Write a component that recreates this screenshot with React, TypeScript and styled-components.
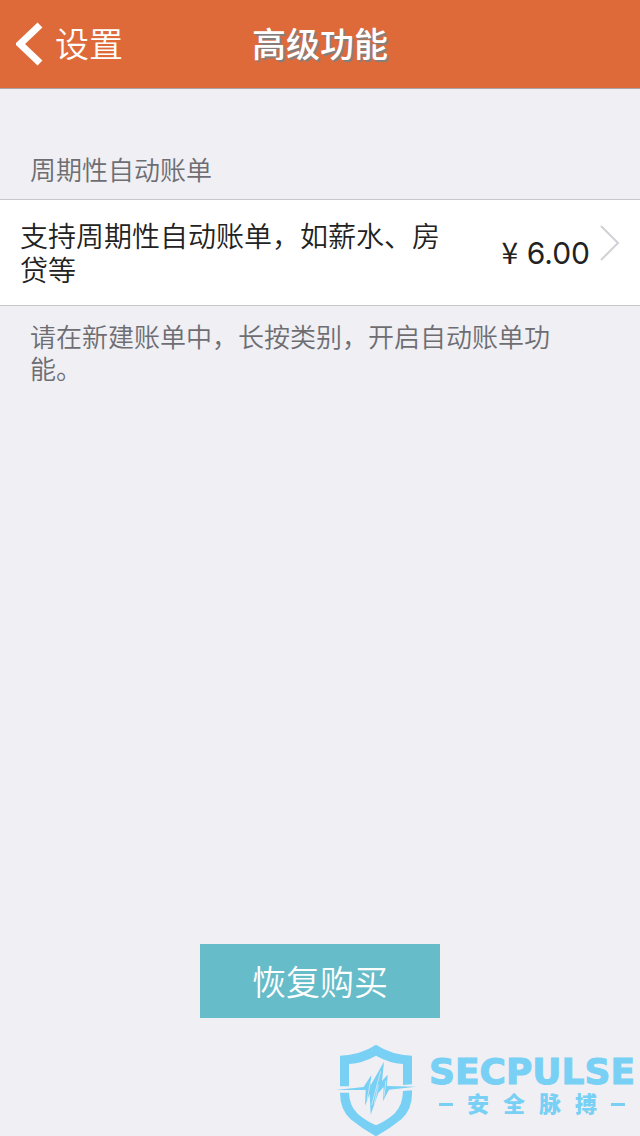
import React from "react";
import styled, { createGlobalStyle } from "styled-components";

const GlobalStyle = createGlobalStyle`
  * { box-sizing: border-box; }
  body {
    margin: 0;
    background: #efeff4;
    font-family: Inter, "Noto Sans CJK SC", sans-serif;
  }
`;

const Page = styled.div`
  display: flex;
  flex-direction: column;
  min-height: 100vh;
`;

const NavBar = styled.header`
  display: grid;
  grid-template-columns: 1fr auto 1fr;
  align-items: center;
  height: 89px;
  padding: 0 16px;
  background: #de6a3a;
  border-bottom: 1px solid #a9a3a6;
  color: #fff;
`;

const BackLink = styled.a`
  display: flex;
  align-items: center;
  gap: 12px;
  color: inherit;
  text-decoration: none;
  font-size: 34px;
  font-weight: 350;
  line-height: 48px;
`;

const BackLabel = styled.span`
  padding-top: 2px;
`;

const NavTitle = styled.h1`
  margin: 0;
  padding-top: 2px;
  font-size: 34px;
  font-weight: 500;
  line-height: 48px;
  text-shadow: 2px 2px 1px #808080;
`;

const SectionTitle = styled.h2`
  margin: 0;
  padding: 64px 30px 10px;
  color: #6d6d72;
  font-size: 26px;
  font-weight: 350;
  line-height: 36px;
`;

const ProductRow = styled.button`
  display: flex;
  align-items: center;
  width: 100%;
  padding: 20px 20px 17px;
  border: solid #c8c7cc;
  border-width: 1px 0;
  background: #fff;
  color: #222;
  font-family: inherit;
  text-align: left;
`;

const ProductName = styled.span`
  flex: 1;
  padding-right: 48px;
  font-size: 28px;
  font-weight: 350;
  line-height: 34px;
`;

const Price = styled.span`
  margin-right: 10px;
  padding-bottom: 4px;
  font-size: 30px;
  line-height: 30px;
`;

const Currency = styled.span`
  font-family: "Noto Sans CJK SC", sans-serif;
`;

const Chevron = styled.svg`
  align-self: flex-start;
  margin-top: 5px;
`;

const SectionNote = styled.p`
  margin: 0;
  padding: 16px 60px 0 30px;
  color: #6d6d72;
  font-size: 26px;
  font-weight: 350;
  line-height: 32px;
`;

const RestoreButton = styled.button`
  align-self: center;
  width: 240px;
  height: 74px;
  margin-top: auto;
  padding: 0 0 2px;
  border: 0;
  background: #66bcc9;
  color: #fff;
  font-family: inherit;
  font-size: 34px;
  font-weight: 350;
`;

const Brand = styled.footer`
  display: flex;
  justify-content: flex-end;
  gap: 13px;
  margin-top: 26px;
  padding-right: 5px;
  color: #78d0f4;
`;

const BrandText = styled.div`
  display: flex;
  flex-direction: column;
  align-items: center;
  padding-top: 10px;
`;

const BrandName = styled.span`
  font-family: "DejaVu Sans", sans-serif;
  font-size: 36px;
  font-weight: 700;
  line-height: 36px;
  -webkit-text-stroke: 1px currentColor;
`;

const BrandSub = styled.span`
  display: flex;
  align-items: center;
  gap: 14px;
  font-size: 22px;
  font-weight: 900;
  line-height: 28px;
`;

const Dash = styled.i`
  width: 14px;
  height: 3px;
  background: currentColor;
`;

export default function App() {
  return (
    <Page>
      <GlobalStyle />
      <NavBar>
        <BackLink href="#settings">
          <svg width="27" height="44" viewBox="0 0 27 44" fill="none" aria-hidden="true">
            <path d="M24 3 4 22 24 41" stroke="#fff" strokeWidth="7" />
          </svg>
          <BackLabel>设置</BackLabel>
        </BackLink>
        <NavTitle>高级功能</NavTitle>
      </NavBar>
      <main>
        <SectionTitle>周期性自动账单</SectionTitle>
        <ProductRow type="button">
          <ProductName>支持周期性自动账单，如薪水、房贷等</ProductName>
          <Price>
            <Currency>¥</Currency> 6.00
          </Price>
          <Chevron width="20" height="36" viewBox="0 0 20 36" fill="none" aria-hidden="true">
            <path d="M1 1 18 18 1 35" stroke="#d1d1d6" strokeWidth="2" />
          </Chevron>
        </ProductRow>
        <SectionNote>请在新建账单中，长按类别，开启自动账单功能。</SectionNote>
      </main>
      <RestoreButton type="button">恢复购买</RestoreButton>
      <Brand>
        <svg width="80" height="92" viewBox="30 22 240 276" fill="currentColor" aria-hidden="true">
          <path d="M42 149V57Q105 54 150 24Q195 54 258 57V143L231 145V82Q189 79 150 57Q111 79 69 82V149Z" />
          <path d="M42 168H69Q70 207 95 231Q116 250 150 266Q184 250 205 231Q230 207 231 163L258 161V172Q258 219 226 248Q192 276 150 299Q108 276 74 248Q42 218 42 168Z" />
          <path d="M30 160 113 151 136 115 134 146 174 75 168 133 185 114 183 148 270 150 189 159 171 193 173 151 157 169 134 234 131 172 117 207 119 160Z" />
          <path d="M123 190 134 132M137 205 164 104M145 201 157 144M174 180 180 132" stroke="#efeff4" strokeWidth="2" fill="none" />
        </svg>
        <BrandText>
          <BrandName>SECPULSE</BrandName>
          <BrandSub>
            <Dash />
            <span>安</span>
            <span>全</span>
            <span>脉</span>
            <span>搏</span>
            <Dash />
          </BrandSub>
        </BrandText>
      </Brand>
    </Page>
  );
}
